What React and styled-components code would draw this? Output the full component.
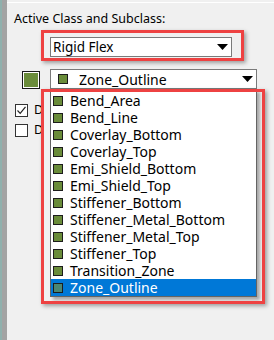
import styled, { createGlobalStyle } from "styled-components";

const GlobalStyle = createGlobalStyle`
  body {
    margin: 0;
    background: #f0f0f0;
    font-family: "Noto Sans", "Open Sans", sans-serif;
    font-size: 12px;
    color: #000;
  }
`;

const layers = [
  "Bend_Area",
  "Bend_Line",
  "Coverlay_Bottom",
  "Coverlay_Top",
  "Emi_Shield_Bottom",
  "Emi_Shield_Top",
  "Stiffener_Bottom",
  "Stiffener_Metal_Bottom",
  "Stiffener_Metal_Top",
  "Stiffener_Top",
  "Transition_Zone",
  "Zone_Outline",
];

const selected = "Zone_Outline";

function Arrow() {
  return (
    <svg width="11" height="6" viewBox="0 0 11 6">
      <path d="M0 0 L11 0 L5.5 6 Z" fill="#000" />
    </svg>
  );
}

export default function App() {
  return (
    <>
      <GlobalStyle />
      <Frame>
        <LeftStrip />
        <Panel>
          <Title>Active Class and Subclass:</Title>
          <ClassCombo>
            <span>Rigid Flex</span>
            <Arrow />
          </ClassCombo>
          <SubRow>
            <Swatch />
            <SubCombo>
              <ComboLabel>
                <Chip />
                <span>Zone_Outline</span>
              </ComboLabel>
              <Arrow />
            </SubCombo>
          </SubRow>
          <CheckRow $top={13}>
            <CheckBox>
              <svg width="11" height="11" viewBox="0 0 11 11">
                <path d="M1.5 5.5 L4.2 8.3 L9.5 1.8" fill="none" stroke="#222" strokeWidth="1.2" />
              </svg>
            </CheckBox>
            <CheckLabel>Dir</CheckLabel>
          </CheckRow>
          <CheckRow $top={4}>
            <CheckBox />
            <CheckLabel>Dir</CheckLabel>
          </CheckRow>
        </Panel>

        <Mark $left={41} $top={30} $width={203} $height={31} />
        <DropList>
          {layers.map((name) => (
            <Item key={name} $active={name === selected}>
              <Chip $active={name === selected} />
              <span>{name}</span>
            </Item>
          ))}
        </DropList>
        <Mark $left={41} $top={89} $width={224} $height={215} />
      </Frame>
    </>
  );
}

const Frame = styled.div`
  position: relative;
  display: flex;
  width: 274px;
  height: 340px;
  overflow: hidden;
`;

const LeftStrip = styled.div`
  width: 5px;
  border-left: 2px solid #8fb0ac;
  background: #a3a3a3;
`;

const Panel = styled.div`
  flex: 1;
  display: flex;
  flex-direction: column;
  background: #f0f0f0;
  border-top: 1px solid #ffffff;
  margin-top: 2px;
`;

const Title = styled.div`
  margin: 8px 0 0 7px;
  font-size: 12.5px;
  line-height: 16px;
`;

const ComboBase = styled.div`
  display: flex;
  align-items: center;
  justify-content: space-between;
  height: 20px;
  box-sizing: border-box;
  background: #fff;
  border: 1px solid #7a7a7a;
  padding: 0 3px 0 2px;
  line-height: 17px;
`;

const ClassCombo = styled(ComboBase)`
  margin: 10px 0 0 43px;
  width: 182px;
  font-size: 13.5px;
`;

const SubRow = styled.div`
  display: flex;
  align-items: flex-start;
  margin-top: 12px;
`;

const Swatch = styled.div`
  width: 18px;
  height: 18px;
  box-sizing: border-box;
  margin: 2px 0 0 15px;
  border: 1px solid #1a1a1a;
  outline: 1px solid #fff;
  outline-offset: -2px;
  background: #6a8c3a;
`;

const SubCombo = styled(ComboBase)`
  margin-left: 10px;
  width: 207px;
  font-size: 14px;
  padding-left: 7px;
  padding-right: 3px;
`;

const ComboLabel = styled.div`
  display: flex;
  align-items: center;
  gap: 11px;
`;

const Chip = styled.span`
  display: inline-block;
  width: 10px;
  height: 10px;
  box-sizing: border-box;
  border: 1px solid #1c1c1c;
  background: ${(p) => (p.$active ? "#4a8672" : "#6a8c3a")};
  flex-shrink: 0;
`;

const CheckRow = styled.div`
  display: flex;
  align-items: center;
  gap: 6px;
  margin: ${(p) => p.$top}px 0 0 8px;
  font-size: 12.5px;
  line-height: 16px;
`;

const CheckLabel = styled.span`
  display: inline-block;
  max-width: 8px;
  overflow: hidden;
  white-space: nowrap;
`;

const CheckBox = styled.div`
  width: 13px;
  height: 13px;
  box-sizing: border-box;
  border: 1px solid #333;
  background: #fff;
  display: flex;
  align-items: center;
  justify-content: center;
`;

const DropList = styled.div`
  position: absolute;
  left: 50px;
  top: 89px;
  width: 207px;
  box-sizing: border-box;
  padding-top: 2px;
  background: #fff;
  border: 1px solid #646464;
  box-shadow: 3px 3px 3px rgba(0, 0, 0, 0.3);
`;

const Item = styled.div`
  display: flex;
  align-items: center;
  gap: 7px;
  height: 17px;
  line-height: 17px;
  padding-left: 2px;
  font-size: 14px;
  background: ${(p) => (p.$active ? "#0078d7" : "transparent")};
  color: ${(p) => (p.$active ? "#fff" : "#000")};
`;

const Mark = styled.div`
  position: absolute;
  left: ${(p) => p.$left}px;
  top: ${(p) => p.$top}px;
  width: ${(p) => p.$width}px;
  height: ${(p) => p.$height}px;
  box-sizing: border-box;
  border: 3px solid #ee4242;
  box-shadow: 2px 2px 4px rgba(0, 0, 0, 0.35);
  pointer-events: none;
`;
